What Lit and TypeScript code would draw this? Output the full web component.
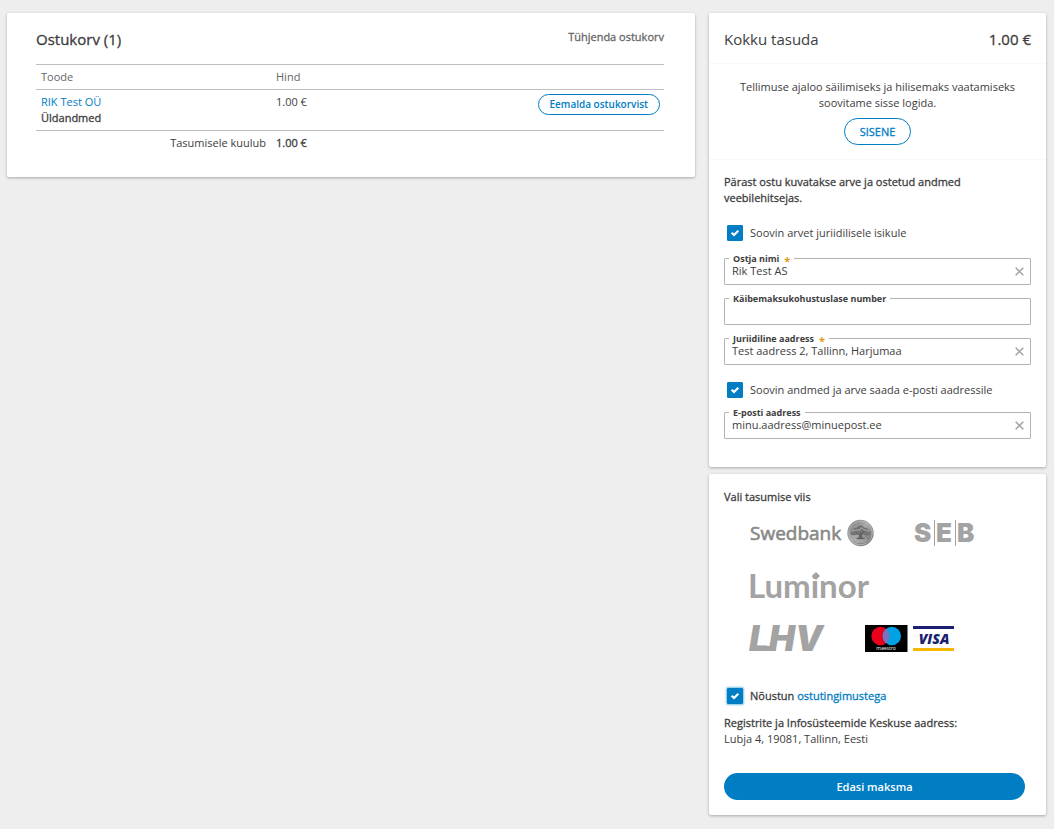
import { LitElement, html, css, nothing } from "lit";
import { customElement, property } from "lit/decorators.js";

const controls = css`
  * { box-sizing: border-box; }
  button, input { font: inherit; color: inherit; margin: 0; }
  button { cursor: pointer; }
  a { color: #007dc3; text-decoration: none; }
  .medium { font-weight: 500; -webkit-text-stroke: 0.3px currentColor; }
`;

@customElement("check-row")
class CheckRow extends LitElement {
  @property() label = "";
  @property() link = "";
  @property({ type: Boolean }) glow = false;

  static styles = [
    controls,
    css`
      :host { display: block; }
      .row { display: flex; align-items: center; gap: 7px; padding-left: 3px; }
      .tick { display: grid; width: 16px; height: 16px; }
      .tick > * { grid-area: 1 / 1; }
      .box {
        appearance: none; width: 16px; height: 16px; border-radius: 1px;
        border: 1px solid #007dc3; background: #fff;
      }
      .box:checked { background: #007dc3; }
      .glow { box-shadow: 0 0 2px 1px #7fc0e6; }
      .mark { pointer-events: none; width: 16px; height: 16px; }
    `,
  ];

  render() {
    return html`<div class="row">
      <span class="tick">
        <input id="c" type="checkbox" class="box ${this.glow ? "glow" : ""}" checked />
        <svg class="mark" viewBox="0 0 16 16" aria-hidden="true">
          <path d="M4.600 7.700 7 10 11.300 5.700" fill="none" stroke="#fff" stroke-width="2.200" />
        </svg>
      </span>
      <span class="${this.link ? "medium" : ""}"><label for="c">${this.label}</label>${this.link ? html` <a href="#">${this.link}</a>` : nothing}</span>
    </div>`;
  }
}

@customElement("text-field")
class TextField extends LitElement {
  @property() label = "";
  @property() value = "";
  @property() type = "text";
  @property({ type: Boolean }) required = false;

  static styles = [
    controls,
    css`
      :host { display: block; }
      .field {
        position: relative; display: flex; align-items: center; height: 27px;
        border: 1px solid #b3b3b3; border-radius: 1px;
      }
      .label {
        position: absolute; top: -6px; left: 4px; display: flex; gap: 5px; height: 12px; padding: 0 4px; background: #fff;
        font-size: 9px; line-height: 12px; font-weight: 700; white-space: nowrap;
      }
      .star { color: #e09a1a; font-size: 11px; line-height: 15px; }
      .input {
        flex: 1; min-width: 0; height: 23px; padding: 0 7px 2px; border: 0; outline: 0; background: none;
      }
      .clear { display: grid; place-items: center; width: 21px; height: 23px; padding: 0 0 1px; border: 0; background: none; }
    `,
  ];

  render() {
    return html`<div class="field">
      <input id="i" class="input" type=${this.type} .value=${this.value} ?required=${this.required} />
      ${this.value
        ? html`<button class="clear" type="button" aria-label="Tühjenda">
            <svg width="9" height="9" viewBox="0 0 9 9"><path d="M.7.7 8.300 8.300M8.300.7.7 8.300" stroke="#a6a6a6" stroke-width="1.600" /></svg>
          </button>`
        : nothing}
      <label class="label" for="i">${this.label}${this.required ? html`<span class="star">*</span>` : nothing}</label>
    </div>`;
  }
}

const swedbank = html`<svg width="125" height="28" viewBox="0 0 125 28">
  <defs>
    <linearGradient id="coin" x1="0" y1="0" x2="1" y2="1">
      <stop offset="0" stop-color="#777" /><stop offset=".45" stop-color="#aaa" /><stop offset="1" stop-color="#666" />
    </linearGradient>
  </defs>
  <text x="0" y="21" font-family="Open Sans" font-weight="400" font-size="19" fill="#888" stroke="#888" stroke-width=".6">Swedbank</text>
  <circle cx="110.500" cy="14" r="13.200" fill="url(#coin)" />
  <circle cx="110.500" cy="14" r="11.800" fill="none" stroke="#bdbdbd" stroke-width=".8" />
  <path d="M101 15.500c-1-3 1-4 2-4 0-3 3-3 4-3 1-3 6-3 7 0 3 0 4 1 4 3 2 0 3 3 2 4-2 2-5 1-6 0-2 1-5 1-7 0-2 1-5 1-6 0z" fill="#737373" />
  <path d="M109.500 15c.5 3-.5 4-3 5h8c-2.500-1-3.500-2-3-5l3-3M109.500 16l-4-3" fill="#606060" stroke="#606060" stroke-width=".7" />
  <path d="M102.500 13c2-3 3-1 4-2s3 2 4-1 3 1 4 1 2 0 4 2M103.500 21h14M105.500 23h10" fill="none" stroke="#c4c4c4" stroke-width=".8" />
</svg>`;

const seb = html`<svg width="61" height="28" viewBox="0 0 61 28">
  <g font-family="Inter" font-weight="900" font-size="26" fill="#a3a3a3">
    <text x="-1" y="23">S</text><text x="21" y="23">E</text><text x="42" y="23">B</text>
  </g>
  <path d="M19.500 1v26M40.500 1v26" stroke="#a3a3a3" />
</svg>`;

const luminor = html`<svg width="120" height="28" viewBox="0 0 120 28">
  <text x="-2" y="26" font-family="Lato" font-weight="700" font-size="33" fill="#a3a3a3">Luminor</text>
  <path d="m66 0 4 4-4 4-4-4z" fill="#a3a3a3" />
</svg>`;

const lhv = html`<svg width="75" height="28" viewBox="0 0 75 28">
  <text x="-1" y="26" font-family="Inter" font-style="italic" font-weight="900" font-size="35" fill="#a3a3a3">LHV</text>
  <path d="M2 21h24l-1 5H0z" fill="#a3a3a3" />
</svg>`;

const cards = html`<svg width="90" height="28" viewBox="0 0 90 28">
  <path d="M0 0h42.500v27H0z" fill="#000" />
  <circle cx="15.500" cy="11" r="9.200" fill="#eb001b" />
  <circle cx="26.800" cy="11" r="9.200" fill="#00a2e5" />
  <path d="M21.150 3.800a9.200 9.200 0 0 1 0 14.400a9.200 9.200 0 0 1 0-14.400" fill="#7673c0" />
  <text x="21" y="25" text-anchor="middle" font-family="Open Sans" font-size="5" fill="#fff">maestro</text>
  <path d="M48 1h41v3H48z" fill="#1a1f71" />
  <path d="M48 23h41v3H48z" fill="#f7b600" />
  <text x="69" y="19" text-anchor="middle" font-family="Open Sans" font-style="italic" font-weight="800" font-size="14" fill="#1a1f71">VISA</text>
</svg>`;

const methods: [string, unknown][] = [
  ["Swedbank", swedbank],
  ["SEB", seb],
  ["Luminor", luminor],
  ["LHV", lhv],
  ["Maestro, Visa", cards],
];

@customElement("app-root")
class AppRoot extends LitElement {
  static styles = [
    controls,
    css`
      :host {
        display: block; min-height: 100vh; background: #eee; color: #3d3d3d;
        font: 11px/16px "Open Sans", sans-serif;
      }
      .page { display: grid; grid-template-columns: minmax(0, 1fr) 337px; gap: 14px; align-items: start; padding: 13px 8px 13px 7px; }
      .panel { background: #fff; border-radius: 2px; box-shadow: 0 1px 3px rgba(0, 0, 0, 0.3); }
      .cart { padding: 16px 31px 22px 29px; }
      .head { display: flex; justify-content: space-between; align-items: flex-start; height: 35px; }
      .title { margin: 0; font-size: 15px; line-height: 20px; }
      .light { font-weight: 400; }
      .empty { padding: 0; border: 0; background: none; color: #666; }
      .table { width: 100%; border-collapse: collapse; table-layout: fixed; }
      .table th, .table td { padding: 4px 5px; text-align: left; vertical-align: top; }
      .table th { color: #666; font-weight: 400; }
      .line { border-top: 1px solid #bfbfbf; }
      .name { width: 235px; }
      .price { width: 130px; }
      .table .end { text-align: right; }
      .table .action { text-align: right; padding-right: 4px; }
      .pill { border: 1px solid #007dc3; border-radius: 14px; background: #fff; color: #007dc3; }
      .remove { display: inline-block; height: 21px; padding: 0 11px; font-size: 10px; line-height: 19px; font-weight: 600; vertical-align: top; }
      .login { height: 27px; padding: 0 15px; }
      .side { display: grid; gap: 7px; }
      .total { display: flex; justify-content: space-between; padding: 16px 15px 14px; border-bottom: 1px solid #f9f9f9; }
      .signin { display: grid; justify-items: center; gap: 7px; padding: 15px 30px 14px; text-align: center; border-bottom: 1px solid #f9f9f9; }
      .text { margin: 0; }
      .buyer { display: grid; padding: 14px 15px 28px; }
      .checks { padding: 19px 0 17px; }
      .fields { display: grid; gap: 13px; }
      .mail { padding: 17px 0 14px; }
      .pay { padding: 15px; }
      .methods { display: flex; flex-wrap: wrap; gap: 25px 40px; padding: 14px 48px 35px 26px; }
      .method { display: block; height: 28px; padding: 0; border: 0; background: none; }
      .method svg { display: block; overflow: visible; }
      .address { padding: 11px 6px 26px 0; }
      .submit { display: block; width: calc(100% - 6px); height: 27px; border: 0; border-radius: 14px; background: #007dc3; color: #fff; font-weight: 600; }
    `,
  ];

  render() {
    return html`<main class="page">
      <section class="panel cart">
        <div class="head">
          <h1 class="title medium">Ostukorv (1)</h1>
          <button class="empty medium" type="button">Tühjenda ostukorv</button>
        </div>
        <table class="table">
          <colgroup><col class="name" /><col class="price" /><col /></colgroup>
          <thead>
            <tr class="line"><th>Toode</th><th>Hind</th><th></th></tr>
          </thead>
          <tbody>
            <tr class="line">
              <td><a href="#">RIK Test OÜ</a><br /><span class="medium">Üldandmed</span></td>
              <td>1.00 €</td>
              <td class="action"><button class="pill remove" type="button">Eemalda ostukorvist</button></td>
            </tr>
            <tr class="line"><td class="end">Tasumisele kuulub</td><td class="medium">1.00 €</td><td></td></tr>
          </tbody>
        </table>
      </section>
      <aside class="side">
        <section class="panel">
          <div class="total">
            <h2 class="title light">Kokku tasuda</h2>
            <span class="title medium">1.00 €</span>
          </div>
          <div class="signin">
            <p class="text">Tellimuse ajaloo säilimiseks ja hilisemaks vaatamiseks soovitame sisse logida.</p>
            <button class="pill login medium" type="button">SISENE</button>
          </div>
          <div class="buyer">
            <p class="text medium">Pärast ostu kuvatakse arve ja ostetud andmed veebilehitsejas.</p>
            <check-row class="checks" label="Soovin arvet juriidilisele isikule"></check-row>
            <div class="fields">
              <text-field label="Ostja nimi" value="Rik Test AS" required></text-field>
              <text-field label="Käibemaksukohustuslase number"></text-field>
              <text-field label="Juriidiline aadress" value="Test aadress 2, Tallinn, Harjumaa" required></text-field>
            </div>
            <check-row class="mail" label="Soovin andmed ja arve saada e-posti aadressile"></check-row>
            <text-field type="email" label="E-posti aadress" value="minu.aadress@minuepost.ee"></text-field>
          </div>
        </section>
        <section class="panel pay">
          <p class="text medium">Vali tasumise viis</p>
          <div class="methods">
            ${methods.map(([name, logo]) => html`<button class="method" type="button" aria-label=${name}>${logo}</button>`)}
          </div>
          <check-row glow label="Nõustun" link="ostutingimustega"></check-row>
          <p class="text address"><span class="medium">Registrite ja Infosüsteemide Keskuse aadress:</span><br />Lubja 4, 19081, Tallinn, Eesti</p>
          <button class="submit" type="button">Edasi maksma</button>
        </section>
      </aside>
    </main>`;
  }
}
